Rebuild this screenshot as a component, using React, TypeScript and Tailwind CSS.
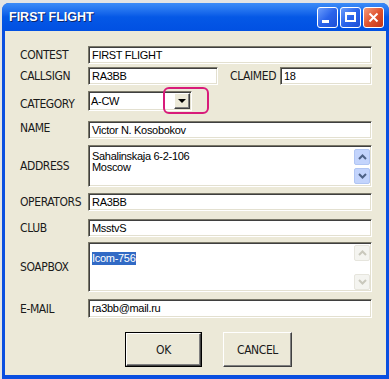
import React from "react";

const LABEL = "font-['DejaVu_Sans',sans-serif] font-stretch-condensed text-[12px] tracking-[-0.4px] text-[#1a1a1a] leading-none";
const VALUE = "font-['Liberation_Sans',Arial,sans-serif] text-[11px] tracking-[-0.3px] text-black leading-none";
const SUNKEN =
  "bg-white border border-t-[#7a7869] border-l-[#7a7869] border-b-white border-r-white shadow-[inset_1px_1px_0_#3f3f3f,inset_-1px_-1px_0_#e3e0d0]";

function Field({ value, className = "" }: { value: string; className?: string }) {
  return (
    <div className={`${SUNKEN} h-[18px] flex items-center pl-[3px] ${className}`}>
      <span className={VALUE}>{value}</span>
    </div>
  );
}

function ScrollBtn({ dir, disabled }: { dir: "up" | "down"; disabled?: boolean }) {
  return (
    <div
      className={`w-[16px] h-[16px] rounded-[2px] border flex items-center justify-center ${
        disabled ? "bg-[#f4f4f0] border-[#e6e5dd]" : "bg-[#c3d4fc] border-[#b0c5f3]"
      }`}
    >
      <svg width="9" height="6" viewBox="0 0 9 6">
        <path
          d={dir === "up" ? "M1 5 L4.5 1.5 L8 5" : "M1 1 L4.5 4.5 L8 1"}
          fill="none"
          stroke={disabled ? "#c9c8bd" : "#4d6185"}
          strokeWidth="2"
        />
      </svg>
    </div>
  );
}

function Row({ label, children, className = "", labelClass = "" }: { label: string; children: React.ReactNode; className?: string; labelClass?: string }) {
  return (
    <div className={`flex items-center pl-[15px] ${className}`}>
      <div className={`w-[68px] shrink-0 ${LABEL} ${labelClass}`}>{label}</div>
      {children}
    </div>
  );
}

function TitleButton({ kind }: { kind: "min" | "max" | "close" }) {
  const bg =
    kind === "close"
      ? "bg-gradient-to-br from-[#f29a7a] via-[#e0532f] to-[#c2351a]"
      : "bg-gradient-to-br from-[#6c9cfb] via-[#2a64eb] to-[#1f4fd6]";
  return (
    <div className={`w-[21px] h-[21px] rounded-[3px] border border-white flex items-center justify-center ${bg}`}>
      {kind === "min" && <div className="w-[7px] h-[3px] bg-white mt-[8px] mr-[4px]" />}
      {kind === "max" && <div className="w-[11px] h-[10px] border-2 border-t-[3px] border-white" />}
      {kind === "close" && (
        <svg width="11" height="11" viewBox="0 0 11 11">
          <path d="M1.5 1.5 L9.5 9.5 M9.5 1.5 L1.5 9.5" stroke="white" strokeWidth="2" />
        </svg>
      )}
    </div>
  );
}

export default function App() {
  return (
    <div className="w-[389px] h-[379px] bg-[#e4e4e4] overflow-hidden">
      <div className="ml-[2px] mt-[3px] w-[387px] h-[376px] rounded-t-[7px] bg-[#0a4fe0] flex flex-col pl-[3px] pr-[3px] pb-[4px]">
        {/* title bar */}
        <div className="h-[28px] -mx-[3px] rounded-t-[7px] bg-gradient-to-b from-[#3c8cf8] via-[#0558e6] to-[#0150e2] flex items-center pl-[7px] pr-[3px]">
          <span className="flex-1 font-['Liberation_Sans',Arial,sans-serif] font-bold text-[12.5px] text-white [text-shadow:1px_1px_0_#0a246a] mt-[1px]">
            FIRST FLIGHT
          </span>
          <div className="flex gap-[2px] mr-[2px]">
            <TitleButton kind="min" />
            <TitleButton kind="max" />
            <TitleButton kind="close" />
          </div>
        </div>

        {/* client */}
        <div className="flex-1 bg-[#ece9d8] relative pt-[15px]">
          <Row label="CONTEST">
            <Field value="FIRST FLIGHT" className="w-[284px]" />
          </Row>
          <Row label="CALLSIGN" className="mt-[3px]">
            <Field value="RA3BB" className="w-[130px]" />
            <div className={`ml-[12px] w-[50px] ${LABEL}`}>CLAIMED</div>
            <Field value="18" className="w-[92px]" />
          </Row>
          <Row label="CATEGORY" className="mt-[6px]" labelClass="mt-[6px]">
            <div className={`${SUNKEN} h-[20px] w-[104px] flex items-center pl-[2px] pr-[1px]`}>
              <span className={`${VALUE} flex-1`}>A-CW</span>
              <div className="w-[16px] h-[16px] bg-[#ece9d8] border border-t-white border-l-white border-b-[#404040] border-r-[#404040] shadow-[inset_-1px_-1px_0_#808080] flex items-center justify-center">
                <div className="w-0 h-0 border-l-[4px] border-r-[4px] border-t-[4px] border-l-transparent border-r-transparent border-t-black" />
              </div>
            </div>
          </Row>
          <Row label="NAME" className="mt-[10px]" labelClass="-mt-[4px]">
            <Field value="Victor N. Kosobokov" className="w-[284px]" />
          </Row>
          <Row label="ADDRESS" className="mt-[6px]">
            <div className={`${SUNKEN} h-[42px] w-[284px] flex pl-[3px] pt-[5px] pr-[1px]`}>
              <div className={`${VALUE} flex-1 leading-[13px]`}>
                Sahalinskaja 6-2-106
                <br />
                Moscow
              </div>
              <div className="flex flex-col justify-between pb-[2px] -mt-[2px]">
                <ScrollBtn dir="up" />
                <ScrollBtn dir="down" />
              </div>
            </div>
          </Row>
          <Row label="OPERATORS" className="mt-[6px]">
            <Field value="RA3BB" className="w-[284px]" />
          </Row>
          <Row label="CLUB" className="mt-[8px]">
            <Field value="MsstvS" className="w-[284px]" />
          </Row>
          <Row label="SOAPBOX" className="mt-[5px]">
            <div className={`${SUNKEN} h-[50px] w-[284px] flex pl-[3px] pt-[1px] pr-[1px]`}>
              <div className="flex-1">
                <span className={`${VALUE} bg-[#316ac5] text-white inline-block py-[1px] pr-[1px]`}>Icom-756</span>
              </div>
              <div className="flex flex-col justify-between pt-[1px] pb-[1px]">
                <ScrollBtn dir="up" disabled />
                <ScrollBtn dir="down" disabled />
              </div>
            </div>
          </Row>
          <Row label="E-MAIL" className="mt-[7px]">
            <Field value="ra3bb@mail.ru" className="w-[284px] h-[19px]" />
          </Row>
          <div className="flex mt-[14px] pl-[120px] gap-[21px]">
            <div className="w-[77px] h-[35px] border border-black">
              <div className="w-full h-full border border-t-white border-l-white border-b-[#404040] border-r-[#404040] shadow-[inset_-1px_-1px_0_#808080] flex items-center justify-center">
                <span className={LABEL}>OK</span>
              </div>
            </div>
            <div className="w-[69px] h-[35px] border border-t-white border-l-white border-b-[#404040] border-r-[#404040] shadow-[inset_-1px_-1px_0_#808080] flex items-center justify-center">
              <span className={LABEL}>CANCEL</span>
            </div>
          </div>

          {/* magenta annotation around the combo arrow */}
          <div className="absolute left-[158px] top-[56px] w-[46px] h-[27px] rounded-[6px] border-2 border-[#d81b7a]" />
        </div>
      </div>
    </div>
  );
}
